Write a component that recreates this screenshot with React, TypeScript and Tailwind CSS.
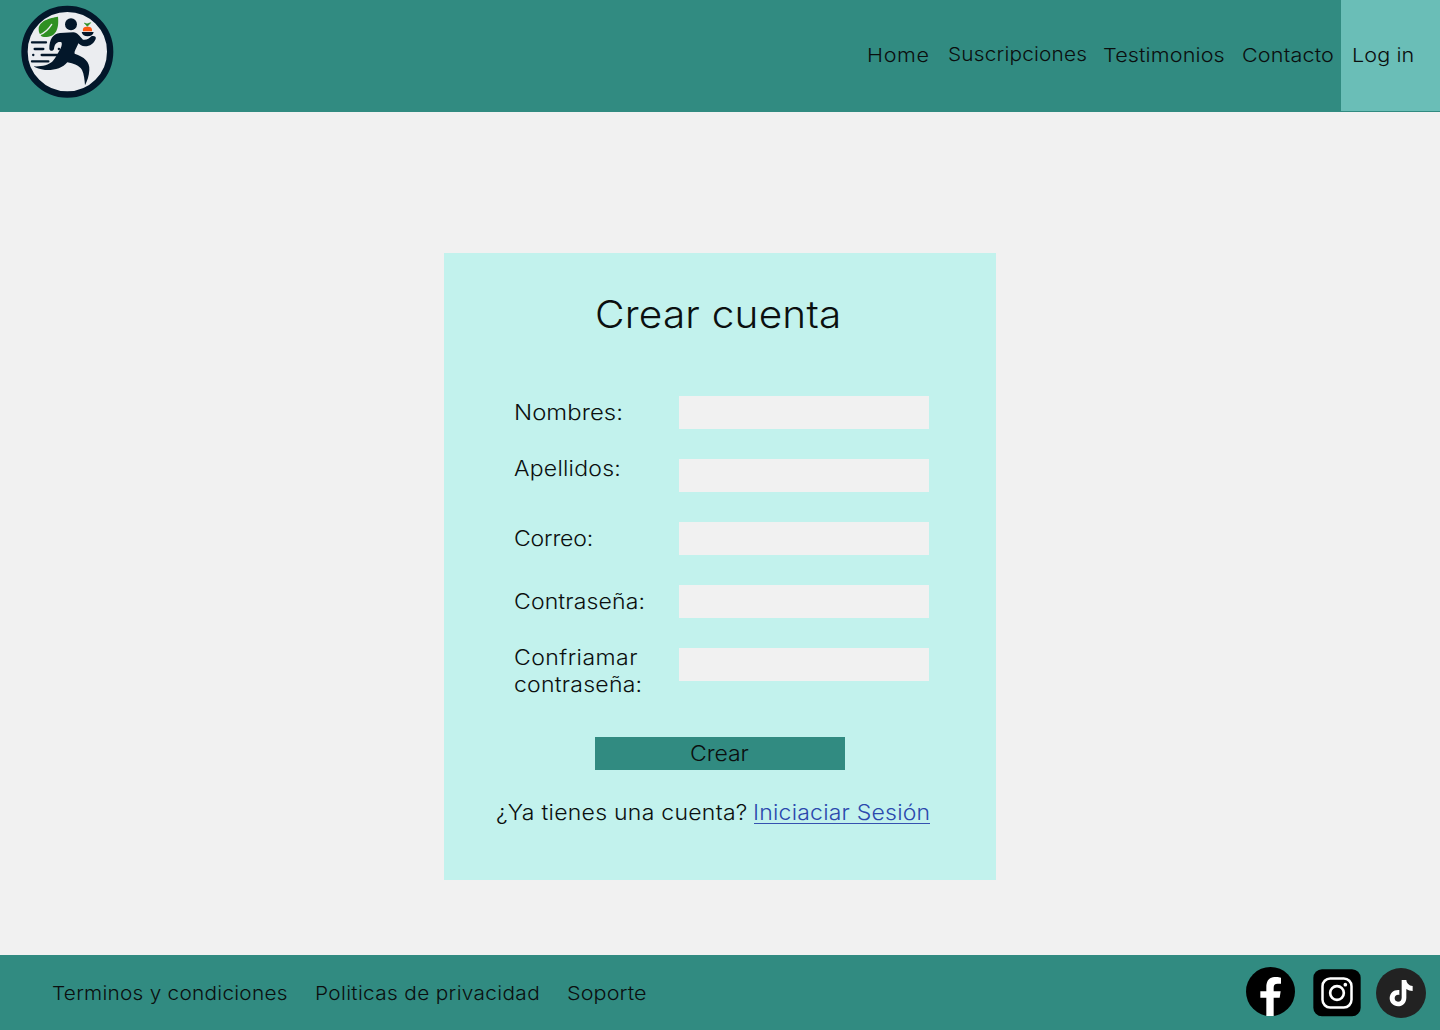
import type { ReactNode } from "react";

type TextProps = { children: ReactNode; className?: string };

function Wide({ children, className = "" }: TextProps) {
  return (
    <span className={`inline-block origin-left scale-x-[1.08] whitespace-nowrap ${className}`}>
      {children}
    </span>
  );
}

function Wider({ children, className = "" }: TextProps) {
  return (
    <span className={`inline-block origin-left scale-x-[1.12] whitespace-nowrap ${className}`}>
      {children}
    </span>
  );
}

function Logo() {
  return (
    <svg viewBox="0 0 345 345" className="ml-2.5 size-[115px] shrink-0" aria-label="Logo">
      <circle cx="172" cy="155" r="128.500" fill="#ebedf0" stroke="#03172a" strokeWidth="19" />
      <g fill="#03172a">
        <circle cx="183" cy="73" r="18" />
        <path d="M118 146C118 120 128 101 150 99L190 97C203 98 208 108 219 119C230 121 238 115 244 109C252 106 260 110 257 117C252 130 240 139 225 139C215 139 210 133 205 130C200 145 192 153 194 161C222 170 240 185 238 210C237 228 232 242 225 256C224 240 222 222 216 210C208 196 190 190 172 187C158 205 130 212 105 210C90 208 78 204 71 199C95 200 115 196 128 184C137 174 143 160 152 145C156 136 157 128 153 126C142 124 134 130 132 146C130 154 119 154 118 146Z" />
        <path d="M215 96H251C249 105 243 109 233 109C223 109 217 105 215 96Z" />
      </g>
      <path
        d="M66 127H108M74 147H100M146.500 147H147M69.500 165H70M95 165H145M66 184H115"
        stroke="#03172a"
        strokeWidth="7"
        strokeLinecap="round"
      />
      <path d="M144 50C120 54 86 62 86 88C86 97 89 102 93 107C97 111 103 112 110 111C142 108 147 80 144 50Z" fill="#2f9022" />
      <path d="M88 105C104 99 116 88 125 73" stroke="#ebedf0" strokeWidth="4" fill="none" strokeLinecap="round" />
      <path d="M219 94C217 84 222 80 232 80C243 80 247 84 246 94Z" fill="#fb5a12" />
      <path d="M232 79L223 69L231 72L242 68Z" fill="#2f9022" stroke="#2f9022" strokeWidth="2" />
    </svg>
  );
}

function Facebook() {
  return (
    <svg viewBox="0 0 147 147" className="size-[49px]" aria-label="Facebook">
      <circle cx="73.500" cy="73.500" r="73.500" fill="#000" />
      <path d="M61 147V92H43V73H61V61C61 40 70 30 91 30C97 30 101 31 105 32V50H95C86 50 83 54 83 62V73H104L101 92H83V147Z" fill="#fff" />
    </svg>
  );
}

function Instagram() {
  return (
    <svg viewBox="-1 -1 144 144" className="size-12" aria-label="Instagram" fill="none">
      <rect width="142" height="141" rx="26" fill="#000" />
      <rect x="27.500" y="27.500" width="87" height="87" rx="23" stroke="#fff" strokeWidth="7.500" />
      <circle cx="71" cy="71" r="20.500" stroke="#fff" strokeWidth="8" />
      <circle cx="96" cy="46" r="5.500" fill="#fff" />
    </svg>
  );
}

function TikTok() {
  return (
    <svg viewBox="0 0 150 150" className="size-[50px]" aria-label="TikTok">
      <circle cx="75" cy="75" r="75" fill="#222" />
      <path d="M77 36H91C92 46 99 53 110 54V69C103 69 96 67 91 63V89C91 104 80 115 66 115C52 115 41 104 41 91C41 75 54 64 70 66V81C62 79 56 84 56 91C56 97 60 101 66 101C73 101 77 96 77 89Z" fill="#fff" />
    </svg>
  );
}

const fields = [
  { name: "nombres", label: <Wider className="tracking-[0.05px]">Nombres:</Wider>, offset: "" },
  { name: "apellidos", label: <Wide className="tracking-[0.22px]">Apellidos:</Wide>, offset: "-mt-[7px]" },
  { name: "correo", label: <Wide className="-tracking-[0.15px]">Correo:</Wide>, offset: "" },
  { name: "clave", label: <Wide className="tracking-[0.13px]">Contraseña:</Wide>, offset: "" },
];

export default function App() {
  return (
    <div className="flex h-[1030px] w-[1440px] flex-col overflow-hidden bg-[#f1f1f1] font-['Inter',sans-serif] font-light text-[#0b0f0f]">
      <header className="flex h-28 shrink-0 items-start justify-between bg-[#318b81]">
        <Logo />
        <nav className="flex text-[19.25px] leading-6">
          <a className="mt-[43px] w-[81px]"><Wider className="tracking-[0.6px]">Home</Wider></a>
          <a className="mt-[42px] w-[155px]"><Wide className="tracking-[0.18px]">Suscripciones</Wide></a>
          <a className="mt-[43px] w-[139px]"><Wider className="tracking-[0.12px]">Testimonios</Wider></a>
          <a className="mt-[43px] w-[99px]"><Wider className="tracking-[0.15px]">Contacto</Wider></a>
          <a className="h-[111px] w-[99px] bg-[#6abeb7] pt-[43px] pl-[10.500px]"><Wider className="tracking-[0.1px]">Log in</Wider></a>
        </nav>
      </header>

      <main className="flex flex-1 justify-center pt-[141px]">
        <form className="flex h-[627px] w-[552px] flex-col bg-[#c2f2ed] text-[21.3px]">
          <h1 className="mt-[37px] pl-[151px] text-[37.5px] leading-[50px]">
            <Wide className="tracking-[0.2px]">Crear cuenta</Wide>
          </h1>
          <div className="mt-14 flex flex-col gap-[30px] pl-[69.500px]">
            {fields.map((f) => (
              <div key={f.name} className="flex h-[33px]">
                <label htmlFor={f.name} className={`h-[33px] w-[165.500px] leading-[33px] ${f.offset}`}>
                  {f.label}
                </label>
                <input id={f.name} className="h-[33px] w-[250px] bg-[#f1f1f1] outline-none" />
              </div>
            ))}
            <div className="flex h-[33px]">
              <label htmlFor="confirmar" className="-mt-1 flex w-[165.500px] flex-col leading-[27px]">
                <span className="h-[27px]"><Wide className="tracking-[0.42px]">Confriamar</Wide></span>
                <span className="h-[27px]"><Wide className="tracking-[0.22px]">contraseña:</Wide></span>
              </label>
              <input id="confirmar" className="h-[33px] w-[250px] bg-[#f1f1f1] outline-none" />
            </div>
          </div>
          <button type="button" className="mt-14 ml-[151px] h-[33px] w-[250px] bg-[#318b81] pl-[95px] text-left leading-[33px]">
            <Wide className="-tracking-[0.09px]">Crear</Wide>
          </button>
          <p className="mt-[29px] ml-[52px] flex leading-[27px]">
            <span className="w-[258px]"><Wide className="tracking-[0.25px]">¿Ya tienes una cuenta?</Wide></span>
            <a className="h-[25px] w-[176px] border-b border-[#3552b0] text-[#2b49ad]">
              <Wide className="-ml-px tracking-[0.2px]">Iniciaciar Sesión</Wide>
            </a>
          </p>
        </form>
      </main>

      <footer className="flex h-[75px] shrink-0 items-start bg-[#318b81] text-[19.25px] leading-6">
        <div className="mt-[26px] ml-[52px] flex">
          <a className="w-[262.500px]"><Wide className="tracking-[0.23px]">Terminos y condiciones</Wide></a>
          <a className="w-[252px]"><Wide className="tracking-[0.32px]">Politicas de privacidad</Wide></a>
          <a><Wider className="tracking-[0.08px]">Soporte</Wider></a>
        </div>
        <div className="mt-3 mr-3.5 ml-auto flex items-start">
          <Facebook />
          <div className="mt-0.5 mr-[15px] ml-[18px]"><Instagram /></div>
          <div className="mt-px"><TikTok /></div>
        </div>
      </footer>
    </div>
  );
}
